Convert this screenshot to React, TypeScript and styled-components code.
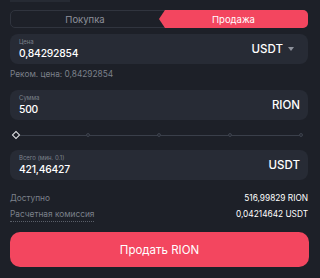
import React, { useState } from "react";
import styled, { createGlobalStyle } from "styled-components";

const GlobalStyle = createGlobalStyle`
  html, body {
    margin: 0;
    padding: 0;
    background: #1d2028;
  }
  * {
    box-sizing: border-box;
  }
`;

const Wrapper = styled.div`
  width: 320px;
  height: 278px;
  overflow: hidden;
  background-color: #1d2028;
  font-family: "Inter", "Noto Sans", sans-serif;
  padding: 10px 12px 0 10px;
  display: flex;
  flex-direction: column;
  position: relative;
`;

const TopStub = styled.div`
  position: absolute;
  top: 0;
  left: 10px;
  width: 60px;
  height: 2px;
  background: #262a33;
`;

const Toggle = styled.div`
  height: 18px;
  display: grid;
  grid-template-columns: 1fr 1fr;
  border: 1px solid #30343e;
  border-radius: 5px;
`;

const Tab = styled.div<{ $active?: boolean }>`
  display: flex;
  align-items: center;
  justify-content: center;
  font-size: 9.5px;
  color: ${(p) => (p.$active ? "#ffffff" : "#8d919b")};
  background: ${(p) => (p.$active ? "#f3465f" : "transparent")};
  margin: ${(p) => (p.$active ? "-1px -1px -1px 0" : "0")};
  border-radius: ${(p) => (p.$active ? "0 5px 5px 0" : "0")};
  clip-path: ${(p) =>
    p.$active
      ? "polygon(6px 0, 100% 0, 100% 100%, 6px 100%, 0 50%)"
      : "none"};
`;

const Field = styled.div<{ $mt: number }>`
  margin-top: ${(p) => p.$mt}px;
  height: 30px;
  background: #272b35;
  border-radius: 8px;
  padding: 0 8px 0 9px;
  display: flex;
  align-items: center;
  justify-content: space-between;
`;

const FieldLeft = styled.div`
  display: flex;
  flex-direction: column;
`;

const FieldLabel = styled.span`
  font-size: 6px;
  line-height: 8px;
  color: #7c818b;
`;

const FieldValue = styled.span`
  font-size: 10.3px;
  line-height: 14px;
  letter-spacing: -0.2px;
  color: #ffffff;
  font-weight: 500;
`;

const Currency = styled.div`
  display: flex;
  align-items: center;
  gap: 5px;
  font-size: 11.5px;
  color: #ffffff;
  font-weight: 500;
`;

const Caret = styled.span`
  width: 0;
  height: 0;
  border-left: 3.5px solid transparent;
  border-right: 3.5px solid transparent;
  border-top: 4px solid #8d919b;
  margin-right: 6px;
`;

const Hint = styled.div`
  margin-top: 5px;
  font-size: 8.3px;
  color: #7c818b;
  line-height: 11px;
`;

const Slider = styled.div`
  margin-top: 10px;
  height: 10px;
  position: relative;
  display: flex;
  align-items: center;
  justify-content: space-between;
  padding: 0 5px 0 3px;
  &::before {
    content: "";
    position: absolute;
    left: 8px;
    right: 7px;
    top: 5px;
    height: 1px;
    background: #3a3f4a;
  }
`;

const Handle = styled.span`
  width: 6px;
  height: 6px;
  border: 1px solid #e6e7ea;
  background: #1d2028;
  transform: rotate(45deg);
  position: relative;
`;

const Dot = styled.span`
  width: 4px;
  height: 4px;
  border-radius: 50%;
  border: 1px solid #3c414c;
  background: #262a33;
  position: relative;
`;

const InfoRow = styled.div<{ $mt: number }>`
  margin-top: ${(p) => p.$mt}px;
  display: flex;
  justify-content: space-between;
  align-items: flex-start;
  font-size: 8.3px;
  line-height: 11px;
`;

const InfoLabel = styled.span<{ $dotted?: boolean }>`
  color: #7c818b;
  border-bottom: ${(p) => (p.$dotted ? "1px dotted #5a5f69" : "none")};
  padding-bottom: ${(p) => (p.$dotted ? "1px" : "0")};
`;

const InfoValue = styled.span`
  color: #ffffff;
`;

const SubmitButton = styled.button`
  margin-top: 10px;
  height: 35px;
  width: 299px;
  border: none;
  border-radius: 10px;
  background: #f3465f;
  color: #ffffff;
  font-family: inherit;
  font-size: 11.5px;
  cursor: pointer;
`;

const App = () => {
  const [mode, setMode] = useState<"buy" | "sell">("sell");

  return (
    <>
      <GlobalStyle />
      <Wrapper>
        <TopStub />
        <Toggle>
          <Tab $active={mode === "buy"} onClick={() => setMode("buy")}>
            Покупка
          </Tab>
          <Tab $active={mode === "sell"} onClick={() => setMode("sell")}>
            Продажа
          </Tab>
        </Toggle>

        <Field $mt={6}>
          <FieldLeft>
            <FieldLabel>Цена</FieldLabel>
            <FieldValue>0,84292854</FieldValue>
          </FieldLeft>
          <Currency>
            USDT
            <Caret />
          </Currency>
        </Field>
        <Hint>Реком. цена: 0,84292854</Hint>

        <Field $mt={10}>
          <FieldLeft>
            <FieldLabel>Сумма</FieldLabel>
            <FieldValue>500</FieldValue>
          </FieldLeft>
          <Currency>RION</Currency>
        </Field>

        <Slider>
          <Handle />
          <Dot />
          <Dot />
          <Dot />
          <Dot />
        </Slider>

        <Field $mt={10}>
          <FieldLeft>
            <FieldLabel>Всего (мин. 0.1)</FieldLabel>
            <FieldValue>421,46427</FieldValue>
          </FieldLeft>
          <Currency>USDT</Currency>
        </Field>

        <InfoRow $mt={13}>
          <InfoLabel>Доступно</InfoLabel>
          <InfoValue>516,99829 RION</InfoValue>
        </InfoRow>
        <InfoRow $mt={5}>
          <InfoLabel $dotted>Расчетная комиссия</InfoLabel>
          <InfoValue>0,04214642 USDT</InfoValue>
        </InfoRow>

        <SubmitButton>Продать RION</SubmitButton>
      </Wrapper>
    </>
  );
};

export default App;
